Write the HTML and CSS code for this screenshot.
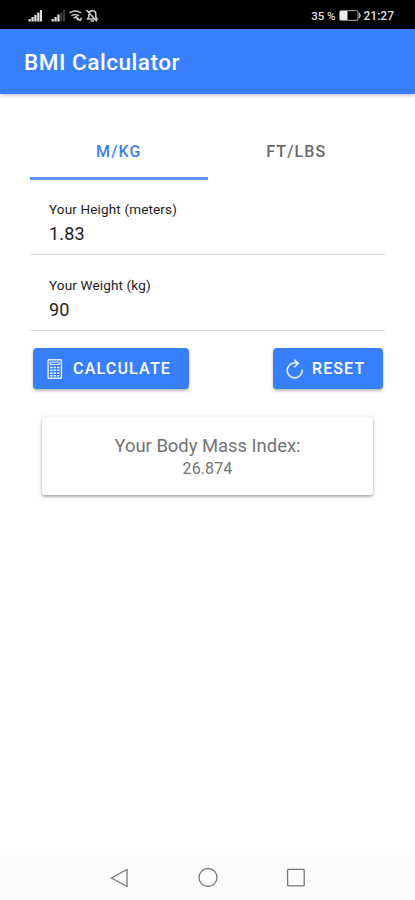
FILE: index.html
```html
<!DOCTYPE html>
<html lang="en">
<head>
<meta charset="utf-8">
<meta name="viewport" content="width=device-width, initial-scale=1">
<title>BMI Calculator</title>
<link rel="stylesheet" href="styles.css">
</head>
<body>
<div class="status">
  <svg class="status-icons" width="72" height="16" viewBox="0 0 72 16" aria-hidden="true">
    <g fill="#ddd">
      <path d="M.5 11h2.300v2.500H.5zM3.400 9h2.300v4.500H3.400zM6.300 7h2.300v6.500H6.300zM9.200 4.500h2.300v9H9.200zM12 2h2v11.500h-2z"/>
      <path d="M23.500 11h2.300v2.500h-2.300zM26.400 9h2.300v4.500h-2.300zM29.300 6.500h2.300v7h-2.300z"/>
      <path fill="#3a3a3a" d="M32.200 4.500h2.300v9h-2.300zM35 2h2v11.500h-2z"/>
    </g>
    <g fill="none" stroke="#ccc" stroke-width="1.500">
      <path d="M41.500 5q5.500-4 11.500 0M43.500 7.800q3.500-2.800 7.500 0M45.500 10q1.500-1 3.500 0l1.500 2.500M47.500 8l5 5M53 9.500v3"/>
      <path d="M59.500 11l1.300-2V6q.3-3 3.500-3.500Q67.800 3 67.800 6v3l1.200 2zM62.500 13h3.500M58.500 2l10.500 11.500"/>
    </g>
  </svg>
  <div class="status-right">
    <span class="percent">35 %</span>
    <svg width="22" height="11" viewBox="0 0 22 11" aria-hidden="true">
      <rect x=".6" y=".6" width="18.400" height="9.800" rx="2" fill="none" stroke="#888" stroke-width="1.200"/>
      <rect x="1" y="1" width="7.500" height="9" rx="1" fill="#eee"/>
      <path d="M20 2.800q1.800 2.700 0 5.400" fill="none" stroke="#bbb" stroke-width="1.500"/>
    </svg>
    <span class="clock">21:27</span>
  </div>
</div>
<header class="toolbar"><h1>BMI Calculator</h1></header>
<main>
  <div class="tabs">
    <button class="tab active">M/KG</button>
    <button class="tab">FT/LBS</button>
  </div>
  <div class="field"><span class="label">Your Height (meters)</span><span class="value">1.83</span></div>
  <div class="field"><span class="label">Your Weight (kg)</span><span class="value">90</span></div>
  <div class="actions">
    <button class="btn calculate">
      <svg width="16" height="20" viewBox="0 0 16 20" fill="none" stroke="#e3edff" aria-hidden="true">
        <rect x="1.100" y=".7" width="13.300" height="18.600" rx=".8" stroke-width="1.400"/>
        <path d="M3.300 3.200h9v2.300h-9z" stroke-width="1"/>
        <path d="M3.200 8.500h9.200M3.200 11.300h9.200M3.200 14.100h9.200M3.200 16.700h9.200" stroke-width="1.600" stroke-dasharray="2.400 1"/>
      </svg>
      <span>CALCULATE</span>
    </button>
    <button class="btn reset">
      <svg width="18" height="20" viewBox="0 0 18 20" fill="none" stroke="#e3edff" stroke-width="1.600" aria-hidden="true">
        <path d="M16.200 10.800A7.500 7.500 0 1 1 8.700 3.900H12M8.300.7l3.900 3.500-3.900 4"/>
      </svg>
      <span>RESET</span>
    </button>
  </div>
  <section class="card">
    <div class="card-title">Your Body Mass Index:</div>
    <div class="result">26.874</div>
  </section>
</main>
<nav class="navbar">
  <svg width="20" height="20" viewBox="0 0 20 20"><path d="M17 1.500v17L1.500 10z"/></svg>
  <svg width="20" height="20" viewBox="0 0 20 20"><circle cx="10" cy="9.500" r="9"/></svg>
  <svg width="20" height="20" viewBox="0 0 20 20"><rect x="1.600" y="1.300" width="16.600" height="16.600" rx=".8"/></svg>
</nav>
</body>
</html>
```
FILE: styles.css
```css
* { box-sizing: border-box; }

body {
  margin: 0;
  height: 900px;
  display: flex;
  flex-direction: column;
  overflow: hidden;
  background: #fff;
  color: #222;
  font-family: Roboto, "Liberation Sans", sans-serif;
}

svg { display: block; flex: none; }
button { border: 0; font-family: inherit; padding: 0; }

.status {
  height: 29px;
  flex: none;
  display: flex;
  align-items: center;
  justify-content: space-between;
  padding: 2px 21px 0 28px;
  background: #000;
  color: #ddd;
  font-size: 12px;
  font-weight: 500;
}

.status-right { display: flex; align-items: center; gap: 3px; }
.percent { font-size: 11.500px; }

.toolbar {
  height: 65px;
  flex: none;
  display: flex;
  align-items: center;
  padding: 0 24px;
  background: #3880ff;
  color: #fff;
  box-shadow: 0 1px 4px rgba(0, 0, 0, .3);
}

.toolbar h1 {
  margin: 0;
  font-size: 22.500px;
  line-height: 28px;
  font-weight: 500;
  letter-spacing: .540px;
}

main { flex: 1; padding: 30px 30px 0; }

.tabs { display: grid; grid-template-columns: 1fr 1fr; height: 56px; }

.tab {
  background: none;
  border-bottom: 3px solid transparent;
  padding-top: 1px;
  color: #6b6b6b;
  font-size: 16px;
  font-weight: 500;
  letter-spacing: 1.100px;
}

.tab.active { color: #3f80ed; border-color: #5e91ec; }

.field {
  height: 75px;
  display: flex;
  flex-direction: column;
  padding: 20px 19px 0;
  border-bottom: 1px solid #dedede;
}

.field + .field { height: 76px; padding-top: 21px; }
.label { font-size: 13.500px; line-height: 18px; letter-spacing: .150px; }
.value { font-size: 18px; line-height: 24px; margin-top: 4px; letter-spacing: .150px; }

.actions {
  display: flex;
  justify-content: space-between;
  padding: 17px 2px 0 3px;
}

.btn {
  height: 41px;
  display: flex;
  align-items: center;
  gap: 10px;
  padding-left: 14px;
  border-radius: 4px;
  background: #3880ff;
  color: #fff;
  font-size: 16px;
  font-weight: 500;
  letter-spacing: 1.200px;
  box-shadow: 0 2px 3px rgba(0, 0, 0, .28);
}

.calculate { width: 156px; }
.reset { width: 110px; gap: 8px; padding-left: 13px; letter-spacing: 1.100px; }

.card {
  height: 78px;
  margin: 28px 12px 0;
  padding-top: 16px;
  border-radius: 3px;
  background: #fff;
  color: #737373;
  text-align: center;
  box-shadow: 0 2px 3px rgba(0, 0, 0, .28), 0 0 4px rgba(0, 0, 0, .12);
}

.card-title { font-size: 18.400px; line-height: 25px; }
.result { font-size: 16px; line-height: 21px; letter-spacing: .100px; }

.navbar {
  height: 45px;
  flex: none;
  display: flex;
  justify-content: center;
  align-items: center;
  gap: 68px;
  background: #fcfcfc;
}

.navbar svg { fill: none; stroke: #777; stroke-width: 1.300; }
```
